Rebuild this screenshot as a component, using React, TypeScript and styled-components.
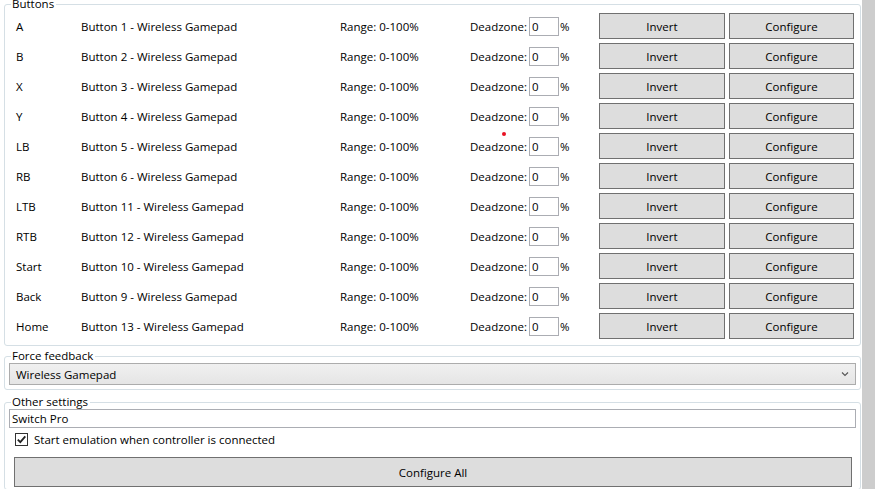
import React, { useState } from "react";
import styled, { createGlobalStyle } from "styled-components";

const GlobalStyle = createGlobalStyle`
  html, body {
    margin: 0;
    padding: 0;
    background: #fff;
  }
  body {
    font-family: "Open Sans", "Noto Sans", sans-serif;
    font-size: 11.5px;
    color: #000;
    overflow: hidden;
  }
`;

type Mapping = {
  name: string;
  button: string;
};

const mappings: Mapping[] = [
  { name: "A", button: "Button 1 - Wireless Gamepad" },
  { name: "B", button: "Button 2 - Wireless Gamepad" },
  { name: "X", button: "Button 3 - Wireless Gamepad" },
  { name: "Y", button: "Button 4 - Wireless Gamepad" },
  { name: "LB", button: "Button 5 - Wireless Gamepad" },
  { name: "RB", button: "Button 6 - Wireless Gamepad" },
  { name: "LTB", button: "Button 11 - Wireless Gamepad" },
  { name: "RTB", button: "Button 12 - Wireless Gamepad" },
  { name: "Start", button: "Button 10 - Wireless Gamepad" },
  { name: "Back", button: "Button 9 - Wireless Gamepad" },
  { name: "Home", button: "Button 13 - Wireless Gamepad" },
];

const App = () => {
  const [startOnConnect, setStartOnConnect] = useState<boolean>(true);

  return (
    <>
      <GlobalStyle />
      <Window>
        <Content>
          <Group $top={-3} $bottom={4}>
            <Legend>Buttons</Legend>
            {mappings.map((m) => (
              <MappingRow key={m.name}>
                <NameCell>{m.name}</NameCell>
                <ButtonCell>{m.button}</ButtonCell>
                <RangeCell>Range: 0-100%</RangeCell>
                <DeadzoneCell>
                  <DeadzoneLabel>Deadzone:</DeadzoneLabel>
                  <NumberBox defaultValue="0" />
                  <span>%</span>
                </DeadzoneCell>
                <ActionButton $width={126}>Invert</ActionButton>
                <ActionButton $width={125}>Configure</ActionButton>
              </MappingRow>
            ))}
          </Group>

          <Group $top={3} $bottom={2}>
            <Legend>Force feedback</Legend>
            <DropDown>
              <span>Wireless Gamepad</span>
              <svg width="8" height="6" viewBox="0 0 8 6">
                <path d="M1 1.5 L4 4.5 L7 1.5" fill="none" stroke="#555" strokeWidth="1.1" />
              </svg>
            </DropDown>
          </Group>

          <Group $top={5} $bottom={2}>
            <Legend>Other settings</Legend>
            <TextBox defaultValue="Switch Pro" />
            <CheckRow onClick={() => setStartOnConnect(!startOnConnect)}>
              <CheckBox>
                {startOnConnect ? (
                  <svg width="11" height="11" viewBox="0 0 11 11">
                    <path d="M1.8 5.6 L4.3 8.2 L9.3 2.4" fill="none" stroke="#222" strokeWidth="1.8" />
                  </svg>
                ) : null}
              </CheckBox>
              Start emulation when controller is connected
            </CheckRow>
            <WideButton>Configure All</WideButton>
          </Group>
          <RedDot />
        </Content>
        <ScrollTrack />
      </Window>
    </>
  );
};

export default App;

const Window = styled.div`
  display: flex;
  width: 875px;
  height: 489px;
  overflow: hidden;
`;

const Content = styled.div`
  position: relative;
  width: 862px;
  padding-left: 4px;
  box-sizing: border-box;
`;

const ScrollTrack = styled.div`
  width: 13px;
  background: #cdcdcd;
`;

const Group = styled.fieldset<{ $top: number; $bottom: number }>`
  width: 857px;
  box-sizing: border-box;
  margin: ${(p) => p.$top}px 0 0 0;
  padding: 0 4px ${(p) => p.$bottom}px 4px;
  border: 1px solid #d5dfe5;
  border-radius: 3px;
  min-width: 0;
`;

const Legend = styled.legend`
  padding: 0 2px 0 1px;
  margin-left: 2px;
  line-height: 14px;
`;

const MappingRow = styled.div`
  display: flex;
  align-items: center;
  height: 30px;
  padding-left: 7px;

  & > * {
    flex-shrink: 0;
  }
`;

const NameCell = styled.div`
  width: 65px;
`;

const ButtonCell = styled.div`
  width: 259px;
`;

const RangeCell = styled.div`
  width: 130px;
`;

const DeadzoneCell = styled.div`
  display: flex;
  align-items: center;
  width: 129px;
`;

const DeadzoneLabel = styled.span`
  width: 59px;
`;

const NumberBox = styled.input`
  width: 30px;
  height: 19px;
  box-sizing: border-box;
  margin: 0 1px 0 0;
  padding: 0 2px;
  border: 1px solid #abadb3;
  font: inherit;
  outline: none;
`;

const ActionButton = styled.button<{ $width: number }>`
  width: ${(p) => p.$width}px;
  height: 26px;
  background: #dddddd;
  border: 1px solid #707070;
  border-radius: 0;
  font: inherit;
  color: #000;
  padding: 0;

  & + & {
    margin-left: 4px;
  }
`;

const DropDown = styled.div`
  display: flex;
  align-items: center;
  justify-content: space-between;
  height: 22px;
  box-sizing: border-box;
  margin-bottom: 2px;
  padding: 0 6px 0 6px;
  border: 1px solid #acacac;
  background: linear-gradient(#f0f0f0, #e5e5e5);
`;

const TextBox = styled.input`
  display: block;
  width: 100%;
  height: 19px;
  box-sizing: border-box;
  margin: 0;
  padding: 0 2px;
  border: 1px solid #abadb3;
  font: inherit;
  outline: none;
`;

const CheckRow = styled.label`
  display: flex;
  align-items: center;
  gap: 6px;
  height: 22px;
  padding-left: 6px;
  user-select: none;
`;

const CheckBox = styled.span`
  display: flex;
  align-items: center;
  justify-content: center;
  width: 13px;
  height: 13px;
  box-sizing: border-box;
  border: 1px solid #333;
  background: #fff;
`;

const WideButton = styled.button`
  display: block;
  width: 838px;
  height: 30px;
  margin: 7px 0 0 5px;
  background: #dddddd;
  border: 1px solid #707070;
  font: inherit;
  color: #000;
`;

const RedDot = styled.span`
  position: absolute;
  left: 502px;
  top: 132px;
  width: 4px;
  height: 4px;
  border-radius: 50%;
  background: #e81123;
`;
